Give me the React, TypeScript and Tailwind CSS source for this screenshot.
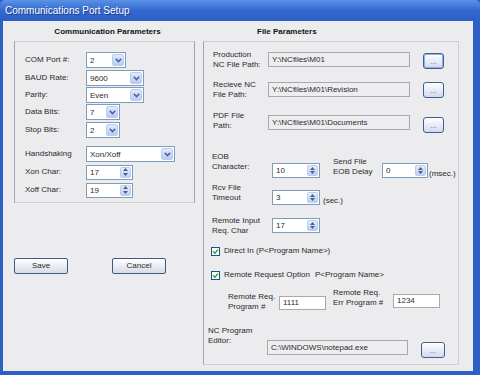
import React from "react";

function Chevron() {
  return (
    <svg width="7" height="5" viewBox="0 0 7 5">
      <path d="M0.8 0.8 L3.5 3.6 L6.2 0.8" fill="none" stroke="#4d6185" strokeWidth="1.5" />
    </svg>
  );
}

function Combo({ cls, value }: { cls: string; value: string }) {
  return (
    <div className={`flex h-[16px] items-stretch border border-[#7f9db9] bg-white p-px ${cls}`}>
      <span className="flex-1 pl-[2px] leading-[13px]">{value}</span>
      <span className="flex w-[12px] items-center justify-center rounded-[2px] border border-[#b9cdf4] bg-gradient-to-b from-[#e1e9fc] to-[#b6cbf5]">
        <Chevron />
      </span>
    </div>
  );
}

function Spin({ cls, value }: { cls: string; value: string }) {
  return (
    <div className={`flex h-[15px] items-stretch border border-[#7f9db9] bg-white p-px ${cls}`}>
      <span className="flex-1 pl-[2px] leading-[12px]">{value}</span>
      <span className="flex w-[11px] flex-col rounded-[2px] border border-[#b9cdf4] bg-gradient-to-b from-[#e6edfc] to-[#bccff5]">
        <span className="flex flex-1 items-center justify-center">
          <svg width="5" height="3" viewBox="0 0 5 3">
            <path d="M0 3 L2.5 0 L5 3Z" fill="#4d6185" />
          </svg>
        </span>
        <span className="flex flex-1 items-center justify-center">
          <svg width="5" height="3" viewBox="0 0 5 3">
            <path d="M0 0 L2.5 3 L5 0Z" fill="#4d6185" />
          </svg>
        </span>
      </span>
    </div>
  );
}

function Field({ cls, value }: { cls: string; value: string }) {
  return (
    <div className={`h-[15px] border border-[#a9a8ac] bg-[#eeedf0] pl-[3px] leading-[13px] ${cls}`}>{value}</div>
  );
}

function WhiteField({ cls, value }: { cls: string; value: string }) {
  return (
    <div className={`h-[14px] border border-[#a9a8ac] bg-white pl-[3px] leading-[12px] ${cls}`}>{value}</div>
  );
}

function Dots({ cls }: { cls: string }) {
  return (
    <div
      className={`flex h-[16px] items-center justify-center rounded-[3px] border border-[#3f5f92] bg-gradient-to-b from-[#ffffff] to-[#d2d9ee] text-[7px] leading-none text-[#555] ${cls}`}
    >
      ...
    </div>
  );
}

function Check() {
  return (
    <div className="flex h-[9px] w-[9px] items-center justify-center border border-[#1c5180] bg-white">
      <svg width="7" height="7" viewBox="0 0 7 7">
        <path d="M1 3.3 L2.9 5.2 L6 1.6" fill="none" stroke="#21a121" strokeWidth="1.4" />
      </svg>
    </div>
  );
}

function Btn({ label }: { label: string }) {
  return (
    <div className="flex h-[16px] w-[54px] items-center justify-center rounded-[2px] border border-[#3d5a86] bg-gradient-to-b from-[#ffffff] to-[#d9dbe6] leading-none">
      {label}
    </div>
  );
}

export default function App() {
  return (
    <div className="flex h-[375px] w-[480px] flex-col overflow-hidden bg-[#2d60c6] font-['Liberation_Sans','Arial',sans-serif] text-[8px] text-[#2a2a2a]">
      {/* Title bar */}
      <div className="flex h-[21px] items-center rounded-t-[5px] bg-gradient-to-b from-[#5b92e6] via-[#3468cf] to-[#2c5fc6] pl-[5px] text-[10px] text-white [text-shadow:1px_1px_0_#1a3f8c]">
        Communications Port Setup
      </div>

      {/* Body */}
      <div className="mb-[4px] ml-[3px] mr-[7px] flex flex-1 bg-[#ecebee] pt-[6px]">
        {/* Left column */}
        <div className="ml-[11px] flex w-[181px] flex-col">
          <div className="h-[14px] pl-[6px] text-center font-bold leading-[10px] text-[#111]">Communication Parameters</div>
          <div className="flex h-[162px] flex-col border border-[#cfcdd0] border-l-[#a4a3a8] border-r-[#a4a3a8] pl-[10px]">
            <div className="mt-[10px] flex h-[16px] items-center">
              <span className="w-[61px] leading-[10px]">COM Port #:</span>
              <Combo cls="w-[40px]" value="2" />
            </div>
            <div className="mt-[2px] flex h-[16px] items-center">
              <span className="w-[61px] leading-[10px]">BAUD Rate:</span>
              <Combo cls="w-[58px]" value="9600" />
            </div>
            <div className="mt-[1px] flex h-[16px] items-center">
              <span className="w-[61px] leading-[10px]">Parity:</span>
              <Combo cls="w-[58px]" value="Even" />
            </div>
            <div className="mt-[1px] flex h-[16px] items-center">
              <span className="w-[61px] leading-[10px]">Data Bits:</span>
              <Combo cls="w-[34px]" value="7" />
            </div>
            <div className="mt-[2px] flex h-[16px] items-center">
              <span className="w-[61px] leading-[10px]">Stop Bits:</span>
              <Combo cls="w-[34px]" value="2" />
            </div>
            <div className="mt-[8px] flex h-[16px] items-center">
              <span className="w-[61px] leading-[10px]">Handshaking</span>
              <Combo cls="w-[89px]" value="Xon/Xoff" />
            </div>
            <div className="mt-[2px] flex h-[16px] items-center">
              <span className="w-[61px] leading-[10px]">Xon Char:</span>
              <Spin cls="w-[47px]" value="17" />
            </div>
            <div className="mt-[2px] flex h-[16px] items-center">
              <span className="w-[61px] leading-[10px]">Xoff Char:</span>
              <Spin cls="w-[47px]" value="19" />
            </div>
          </div>
          <div className="mt-[55px] flex gap-[44px]">
            <Btn label="Save" />
            <Btn label="Cancel" />
          </div>
        </div>

        {/* Right column */}
        <div className="ml-[8px] flex w-[256px] flex-col">
          <div className="h-[14px] pl-[54px] font-bold leading-[10px] text-[#111]">File Parameters</div>
          <div className="flex h-[324px] flex-col border border-[#cfcdd0] border-l-[#a4a3a8] border-r-[#cfcdd0]">
            {/* Row 1 */}
            <div className="mt-[8px] flex h-[20px] items-start pl-[9px]">
              <span className="w-[55px] leading-[10px]">Production<br />NC File Path:</span>
              <Field cls="mt-[2px] w-[142px]" value="Y:\NCfiles\M01" />
              <Dots cls="ml-[13px] mt-[3px] w-[21px] shadow-[inset_0_0_0_1px_#8fb0e0]" />
            </div>
            {/* Row 2 */}
            <div className="mt-[10px] flex h-[20px] items-start pl-[9px]">
              <span className="w-[55px] leading-[10px]">Recieve NC<br />File Path:</span>
              <Field cls="mt-[2px] w-[142px]" value="Y:\NCfiles\M01\Revision" />
              <Dots cls="ml-[13px] mt-[2px] w-[21px]" />
            </div>
            {/* Row 3 */}
            <div className="mt-[11px] flex h-[22px] items-start pl-[9px]">
              <span className="w-[55px] leading-[10px]">PDF File<br />Path:</span>
              <Field cls="mt-[4px] w-[142px]" value="Y:\NCfiles\M01\Documents" />
              <Dots cls="ml-[13px] mt-[6px] w-[21px]" />
            </div>
            {/* Row 4 */}
            <div className="mt-[19px] flex h-[27px] items-start pl-[8px]">
              <span className="w-[60px] leading-[10px]">EOB<br />Character:</span>
              <Spin cls="mt-[11px] w-[48px]" value="10" />
              <span className="ml-[13px] mt-[5px] w-[49px] leading-[10px]">Send File<br />EOB Delay</span>
              <Spin cls="mt-[11px] w-[46px]" value="0" />
              <span className="ml-[1px] mt-[17px] leading-[10px]">(msec.)</span>
            </div>
            {/* Row 5 */}
            <div className="mt-[4px] flex h-[21px] items-start pl-[8px]">
              <span className="w-[60px] leading-[10px]">Rcv File<br />Timeout</span>
              <Spin cls="mt-[7px] w-[48px]" value="3" />
              <span className="ml-[3px] mt-[13px] leading-[10px]">(sec.)</span>
            </div>
            {/* Row 6 */}
            <div className="mt-[12px] flex h-[20px] items-start pl-[8px]">
              <span className="w-[60px] leading-[10px]">Remote Input<br />Req. Char</span>
              <Spin cls="mt-[2px] w-[48px]" value="17" />
            </div>
            {/* Row 7 */}
            <div className="mt-[10px] flex h-[10px] items-center pl-[7px]">
              <Check />
              <span className="ml-[4px] leading-[10px]">Direct In (P&lt;Program Name&gt;)</span>
            </div>
            {/* Row 8 */}
            <div className="mt-[14px] flex h-[10px] items-center pl-[7px]">
              <Check />
              <span className="ml-[4px] w-[91px] leading-[10px]">Remote Request Option</span>
              <span className="leading-[10px]">P&lt;Program Name&gt;</span>
            </div>
            {/* Row 9 */}
            <div className="mt-[8px] flex h-[24px] items-start pl-[24px]">
              <span className="mt-[4px] w-[51px] leading-[10px]">Remote Req.<br />Program #</span>
              <WhiteField cls="mt-[8px] w-[47px]" value="1111" />
              <span className="ml-[7px] w-[60px] leading-[10px]">Remote Req.<br />Err Program #</span>
              <WhiteField cls="mt-[6px] w-[47px]" value="1234" />
            </div>
            {/* Row 10 */}
            <div className="mt-[14px] flex h-[32px] items-start pl-[4px]">
              <span className="w-[59px] leading-[10px]">NC Program<br />Editor:</span>
              <Field cls="mt-[14px] w-[141px]" value="C:\WINDOWS\notepad.exe" />
              <Dots cls="ml-[13px] mt-[16px] w-[24px]" />
            </div>
          </div>
        </div>
      </div>
    </div>
  );
}
